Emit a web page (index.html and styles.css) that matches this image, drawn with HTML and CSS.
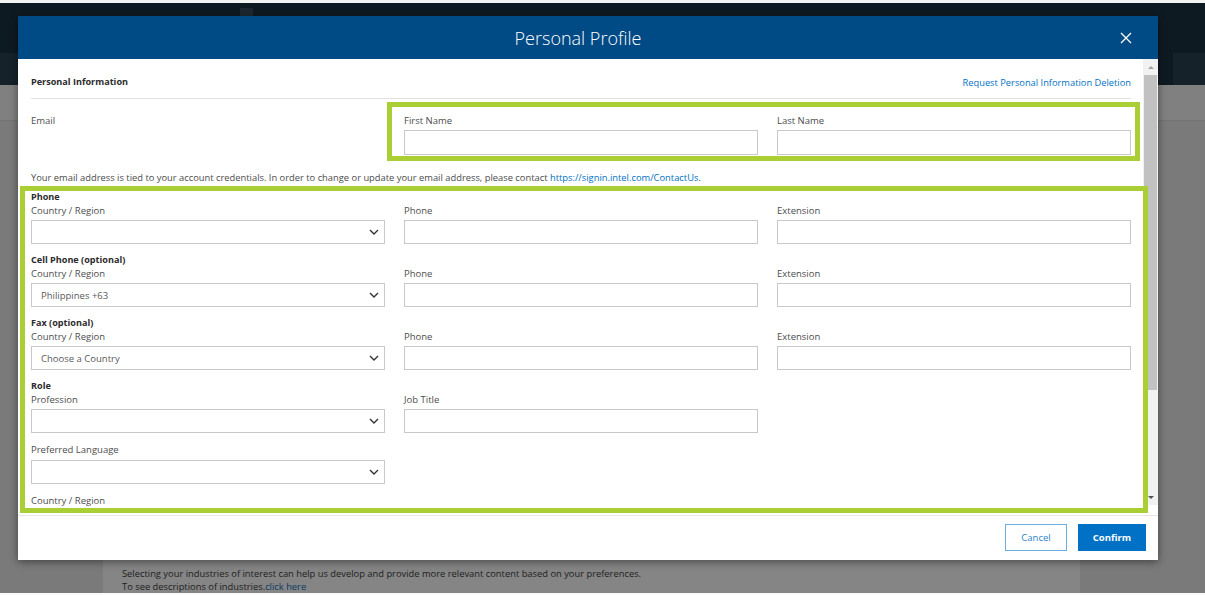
FILE: index.html
```html
<!DOCTYPE html>
<html lang="en">
<head>
    <meta charset="UTF-8">
    <meta name="viewport" content="width=device-width, initial-scale=1.0">
    <title>Personal Profile</title>
    <link rel="stylesheet" href="styles.css">
</head>
<body>
    <div class="page">
        <div class="top-strip"></div>
        <header class="site-header">
            <div class="header-row">
                <div class="header-tab"></div>
            </div>
            <div class="header-row lower">
                <div class="header-side"></div>
                <div class="header-side"></div>
            </div>
        </header>
        <div class="sub-nav"></div>
        <main class="page-main">
            <div class="interest-panel">
                <p>Selecting your industries of interest can help us develop and provide more relevant content based on your preferences.<br>To see descriptions of industries.<a href="#">click here</a></p>
            </div>
        </main>
        <div class="bottom-strip"></div>
    </div>

    <div class="modal">
        <div class="modal-header">
            <h1 class="modal-title">Personal Profile</h1>
            <button class="close-button" aria-label="Close">
                <svg width="12" height="12" viewBox="0 0 12 12"><path d="M1 1 L11 11 M11 1 L1 11" stroke="#fff" stroke-width="1.3" fill="none"/></svg>
            </button>
        </div>

        <div class="modal-body">
            <div class="modal-scroll">
                <div class="section-head">
                    <span class="section-title">Personal Information</span>
                    <a href="#" class="link">Request Personal Information Deletion</a>
                </div>

                <div class="field-grid name-row">
                    <div class="field"><span class="label">Email</span></div>
                    <div class="field"><span class="label">First Name</span><input class="text-input tall" type="text"></div>
                    <div class="field"><span class="label">Last Name</span><input class="text-input tall" type="text"></div>
                </div>

                <p class="email-note">Your email address is tied to your account credentials. In order to change or update your email address, please contact <a href="#" class="link">https://signin.intel.com/ContactUs</a>.</p>

                <div class="group">
                    <div class="group-title">Phone</div>
                    <div class="field-grid">
                        <div class="field">
                            <span class="label">Country / Region</span>
                            <div class="select"><span></span><svg width="10" height="6" viewBox="0 0 10 6"><path d="M1 1 L5 5 L9 1" stroke="#333" stroke-width="1.4" fill="none"/></svg></div>
                        </div>
                        <div class="field"><span class="label">Phone</span><input class="text-input" type="text"></div>
                        <div class="field"><span class="label">Extension</span><input class="text-input" type="text"></div>
                    </div>
                </div>

                <div class="group">
                    <div class="group-title">Cell Phone (optional)</div>
                    <div class="field-grid">
                        <div class="field">
                            <span class="label">Country / Region</span>
                            <div class="select"><span>Philippines +63</span><svg width="10" height="6" viewBox="0 0 10 6"><path d="M1 1 L5 5 L9 1" stroke="#333" stroke-width="1.4" fill="none"/></svg></div>
                        </div>
                        <div class="field"><span class="label">Phone</span><input class="text-input" type="text"></div>
                        <div class="field"><span class="label">Extension</span><input class="text-input" type="text"></div>
                    </div>
                </div>

                <div class="group">
                    <div class="group-title">Fax (optional)</div>
                    <div class="field-grid">
                        <div class="field">
                            <span class="label">Country / Region</span>
                            <div class="select"><span>Choose a Country</span><svg width="10" height="6" viewBox="0 0 10 6"><path d="M1 1 L5 5 L9 1" stroke="#333" stroke-width="1.4" fill="none"/></svg></div>
                        </div>
                        <div class="field"><span class="label">Phone</span><input class="text-input" type="text"></div>
                        <div class="field"><span class="label">Extension</span><input class="text-input" type="text"></div>
                    </div>
                </div>

                <div class="group">
                    <div class="group-title">Role</div>
                    <div class="field-grid">
                        <div class="field">
                            <span class="label">Profession</span>
                            <div class="select"><span></span><svg width="10" height="6" viewBox="0 0 10 6"><path d="M1 1 L5 5 L9 1" stroke="#333" stroke-width="1.4" fill="none"/></svg></div>
                        </div>
                        <div class="field"><span class="label">Job Title</span><input class="text-input" type="text"></div>
                    </div>
                </div>

                <div class="group plain">
                    <div class="field-grid">
                        <div class="field">
                            <span class="label">Preferred Language</span>
                            <div class="select"><span></span><svg width="10" height="6" viewBox="0 0 10 6"><path d="M1 1 L5 5 L9 1" stroke="#333" stroke-width="1.4" fill="none"/></svg></div>
                        </div>
                    </div>
                </div>

                <div class="group plain">
                    <div class="field-grid">
                        <div class="field">
                            <span class="label">Country / Region</span>
                            <div class="select"><span></span><svg width="10" height="6" viewBox="0 0 10 6"><path d="M1 1 L5 5 L9 1" stroke="#333" stroke-width="1.4" fill="none"/></svg></div>
                        </div>
                    </div>
                </div>
            </div>

            <div class="scrollbar">
                <div class="scroll-arrow up"></div>
                <div class="scroll-thumb"></div>
                <div class="scroll-track"></div>
                <div class="scroll-arrow down"></div>
            </div>
        </div>

        <div class="modal-footer">
            <button class="btn btn-cancel">Cancel</button>
            <button class="btn btn-confirm">Confirm</button>
        </div>

        <div class="highlight highlight-names"></div>
        <div class="highlight highlight-contact"></div>
    </div>
</body>
</html>
```

FILE: styles.css
```css
* {
    box-sizing: border-box;
}

body {
    margin: 0;
    font-family: "Open Sans", "Noto Sans", Arial, sans-serif;
    background-color: #7b7b7b;
    overflow: hidden;
}

/* dimmed page behind the dialog */

.page {
    height: 595px;
    display: flex;
    flex-direction: column;
}

.top-strip {
    height: 3px;
    background-color: #f4f4f4;
}

.site-header {
    height: 86px;
    background-color: #0e1a21;
    display: flex;
    flex-direction: column;
}

.header-row {
    height: 50px;
}

.header-tab {
    margin: 5px 0 0 240px;
    width: 13px;
    height: 8px;
    background-color: #1c2831;
}

.header-row.lower {
    flex: 1;
    display: flex;
    justify-content: space-between;
}

.header-side {
    width: 32px;
    background-color: #15222a;
}

.sub-nav {
    height: 37px;
    background-color: #808080;
    border-bottom: 1px solid #747474;
}

.page-main {
    flex: 1;
    background-color: #7a7a7a;
}

.interest-panel {
    margin-left: 103px;
    width: 977px;
    height: 100%;
    background-color: #858585;
    padding: 446px 19px 0;
}

.interest-panel p {
    margin: 0;
    font-size: 9.35px;
    line-height: 13px;
    color: #1d1d1d;
}

.interest-panel a {
    color: #0a3a62;
    text-decoration: none;
}

.bottom-strip {
    height: 2px;
    background-color: #fafafa;
}

/* dialog */

.modal {
    position: absolute;
    top: 16px;
    left: 18px;
    width: 1140px;
    height: 544px;
    background-color: white;
    box-shadow: 0px 2px 8px rgba(0, 0, 0, 0.45);
    display: flex;
    flex-direction: column;
}

.modal-header {
    height: 43px;
    background-color: #004a86;
    display: flex;
    align-items: center;
    justify-content: center;
    padding-right: 20px;
    position: relative;
}

.modal-title {
    margin: 0;
    font-size: 18px;
    font-weight: 300;
    color: white;
}

.close-button {
    position: absolute;
    right: 26px;
    top: 16px;
    padding: 0;
    border: none;
    background: none;
    line-height: 0;
    cursor: pointer;
}

.modal-body {
    height: 456px;
    display: flex;
    align-items: flex-start;
}

.modal-scroll {
    flex: 1;
    height: 454px;
    overflow: hidden;
    padding: 16px 12px 0 13px;
}

.section-head {
    display: flex;
    justify-content: space-between;
    align-items: center;
    height: 14px;
    margin-bottom: 9px;
}

.section-title,
.group-title {
    font-size: 9.1px;
    font-weight: 700;
    color: #2b2b2b;
    line-height: 14px;
}

.link {
    color: #0071c5;
    text-decoration: none;
}

.section-head .link {
    font-size: 9.3px;
}

.field-grid {
    display: grid;
    grid-template-columns: repeat(3, 1fr);
    column-gap: 19px;
}

.name-row {
    border-top: 1px solid #e2e2e2;
    padding-top: 15px;
}

.field {
    display: flex;
    flex-direction: column;
}

.label {
    font-size: 9.5px;
    line-height: 14px;
    color: #4d4d4d;
    margin-bottom: 2px;
}

.text-input {
    height: 24px;
    border: 1px solid #c9c9c9;
    font-family: inherit;
    font-size: 10px;
    padding: 0 10px;
}

.text-input.tall {
    height: 25px;
}

.select {
    height: 24px;
    border: 1px solid #c9c9c9;
    display: flex;
    align-items: center;
    justify-content: space-between;
    padding: 0 5px 0 9px;
    font-size: 9.5px;
    color: #5a5a5a;
}

.email-note {
    margin: 16px 0 5px;
    font-size: 9.35px;
    line-height: 14px;
    color: #4d4d4d;
}

.group {
    margin-bottom: 9px;
}

.group.plain {
    padding-top: 1px;
}

.group.plain .label {
    margin-bottom: 3px;
}

/* fake scrollbar */

.scrollbar {
    width: 15px;
    height: 446px;
    background-color: #f1f1f1;
    display: flex;
    flex-direction: column;
}

.scroll-arrow {
    height: 16px;
    display: flex;
    align-items: center;
    justify-content: center;
}

.scroll-arrow::before {
    content: "";
    border-left: 3px solid transparent;
    border-right: 3px solid transparent;
}

.scroll-arrow.up::before {
    border-bottom: 3px solid #a3a3a3;
}

.scroll-arrow.down::before {
    border-top: 3px solid #505050;
}

.scroll-thumb {
    height: 315px;
    margin: 0 1px;
    background-color: #c1c1c1;
}

.scroll-track {
    flex: 1;
}

.modal-footer {
    flex: 1;
    border-top: 1px solid #e6e6e6;
    display: flex;
    justify-content: flex-end;
    align-items: flex-start;
    gap: 11px;
    padding: 8px 12px 0 0;
}

.btn {
    height: 27px;
    font-family: inherit;
    font-size: 9.5px;
    cursor: pointer;
}

.btn-cancel {
    width: 62px;
    background-color: white;
    border: 1px solid #6aaee0;
    color: #2b82c9;
}

.btn-confirm {
    width: 68px;
    background-color: #0071c5;
    border: 1px solid #0071c5;
    color: white;
    font-weight: 700;
}

/* green annotation frames drawn over the form */

.highlight {
    position: absolute;
    border: 5px solid #a9cf35;
    pointer-events: none;
}

.highlight-names {
    left: 369px;
    top: 86px;
    width: 753px;
    height: 59px;
}

.highlight-contact {
    left: 2px;
    top: 170px;
    width: 1128px;
    height: 327px;
}
```
